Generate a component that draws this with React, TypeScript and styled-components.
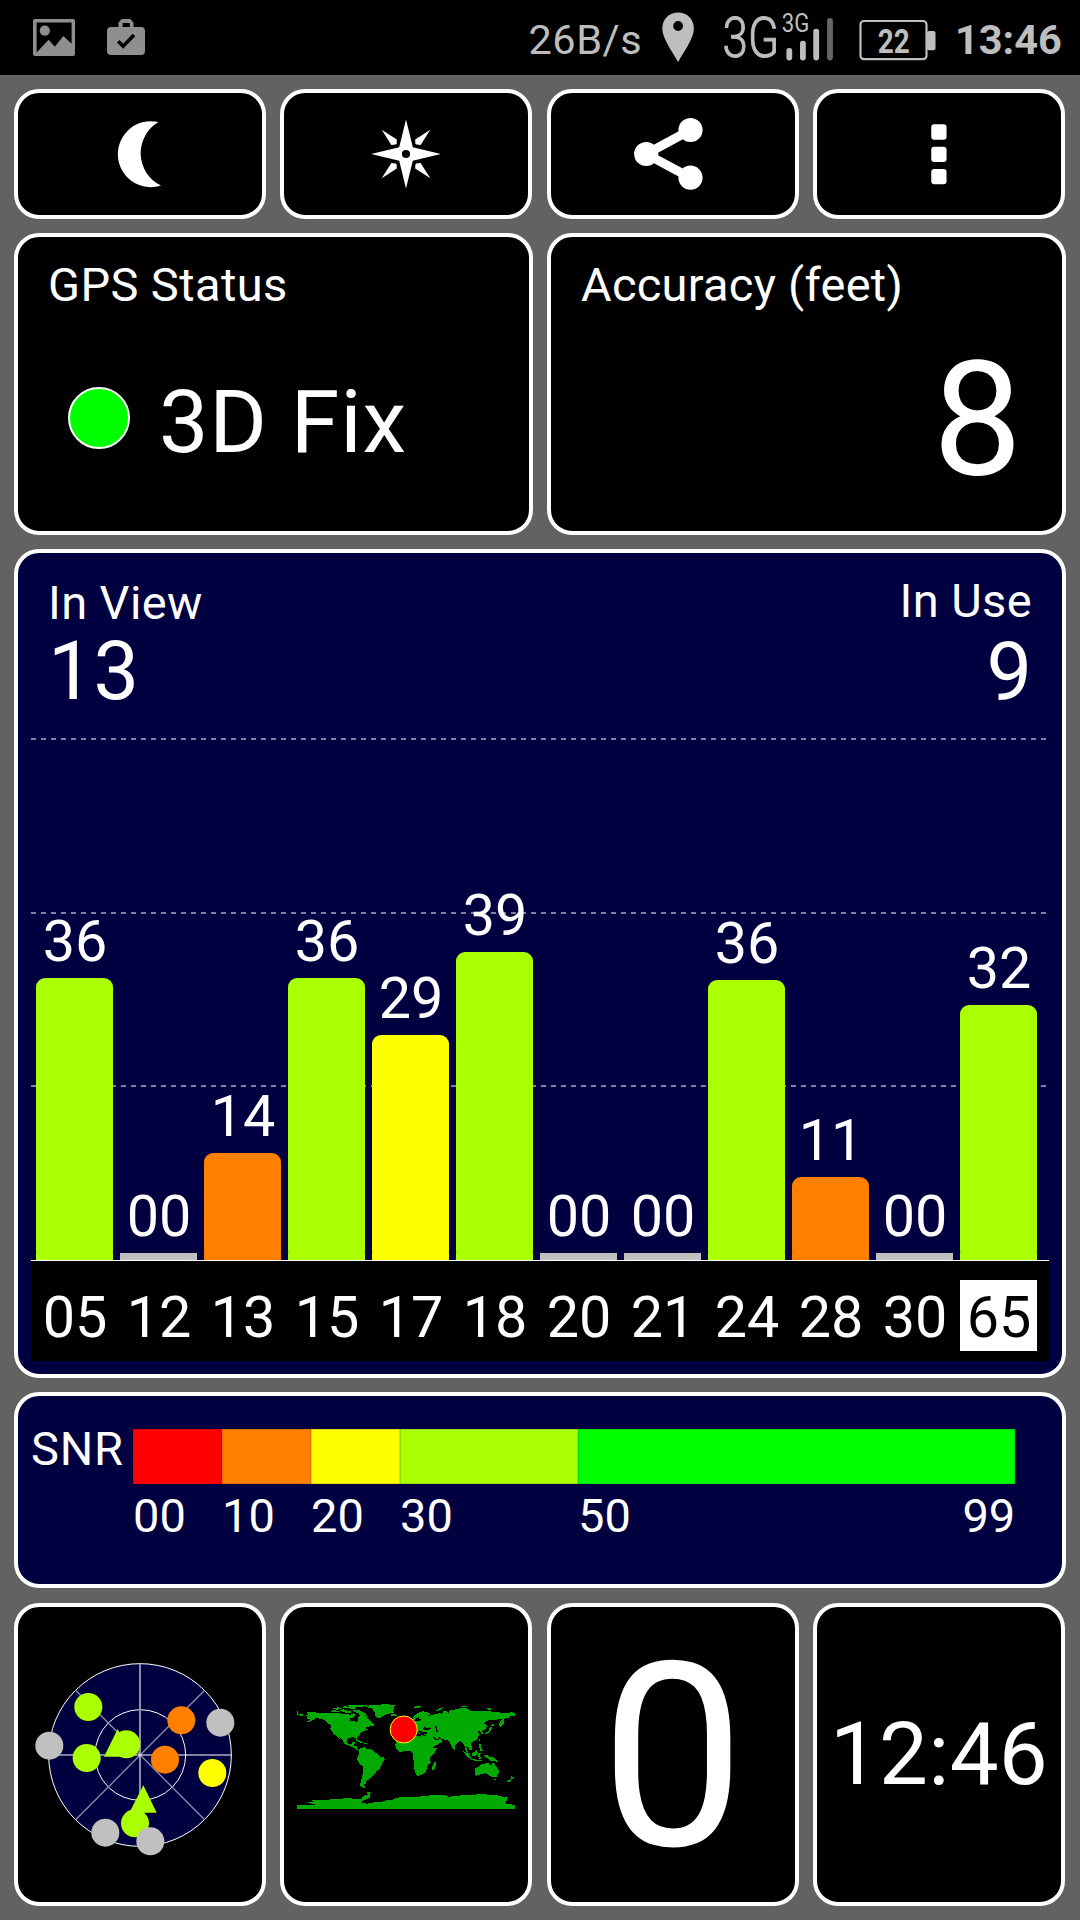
import React from 'react';
import styled, { createGlobalStyle } from 'styled-components';

const LIME = '#aaff00';
const NAVY = '#000040';
const ORANGE = '#ff8000';
const YELLOW = '#ffff00';
const SILVER = '#c0c0c0';

const GlobalStyle = createGlobalStyle`
  * { box-sizing: border-box; }
  html, body { margin: 0; padding: 0; background: #626262; }
  body { font-family: Roboto, "Noto Sans", sans-serif; color: #fff; }
  svg { display: block; flex: none; }
`;

const Screen = styled.div`
  width: 1080px;
  height: 1920px;
  display: flex;
  flex-direction: column;
  background: #626262;
  overflow: hidden;
`;

/* ---------- status bar ---------- */

const StatusBar = styled.header`
  height: 75px;
  flex: none;
  display: flex;
  align-items: flex-start;
  justify-content: space-between;
  background: #000;
  color: #bebebe;
`;

const Indicators = styled.div`
  height: 75px;
  display: flex;
`;

const NoticeGroup = styled(Indicators)`
  padding-left: 32px;
  gap: 30px;
`;

const StatusText = styled.span<{ $width: number; $bold?: boolean; $track?: number }>`
  width: ${(p) => p.$width}px;
  padding-top: 18.5px;
  font-size: 41.5px;
  line-height: 42px;
  white-space: nowrap;
  font-weight: ${(p) => (p.$bold ? 700 : 400)};
  letter-spacing: ${(p) => p.$track ?? 0}px;
`;

/* ---------- cards ---------- */

const Body = styled.main`
  flex: 1;
  padding: 14px 14px 0;
  display: flex;
  flex-direction: column;
  gap: 14px;
`;

const Row = styled.section<{ $height: number }>`
  height: ${(p) => p.$height}px;
  display: flex;
  gap: 14px;
`;

const TileRow = styled.section<{ $height: number; $offset?: number }>`
  height: ${(p) => p.$height}px;
  margin-top: ${(p) => p.$offset ?? 0}px;
  display: grid;
  grid-template-columns: repeat(4, 252px);
  column-gap: 14.334px;
`;

const Card = styled.div<{ $navy?: boolean }>`
  flex: 1 1 0;
  min-width: 0;
  display: flex;
  flex-direction: column;
  border: 4px solid #fff;
  border-radius: 25px;
  background: ${(p) => (p.$navy ? NAVY : '#000')};
`;

const ButtonCard = styled(Card).attrs({ as: 'button' })`
  padding: 0;
  align-items: center;
  justify-content: center;
`;

const CenterCard = styled(Card)`
  align-items: center;
  justify-content: center;
`;

const Label = styled.div<{ $track?: number }>`
  font-size: 47px;
  line-height: 47px;
  white-space: nowrap;
  letter-spacing: ${(p) => p.$track ?? 0}px;
`;

const ReadoutCard = styled(Card)`
  padding: 24px 30px 0 30px;
`;

const FixRow = styled.div`
  display: flex;
  align-items: center;
  gap: 29px;
  padding: 70px 0 0 20px;
`;

const FixDot = styled.span`
  width: 62px;
  height: 62px;
  margin-top: -9px;
  border-radius: 50%;
  border: 2px solid #fff;
  background: #00ff00;
`;

const FixText = styled.span`
  font-size: 88px;
  line-height: 88px;
  white-space: nowrap;
  letter-spacing: 0.9px;
`;

const Accuracy = styled.div`
  align-self: flex-end;
  padding: 32px 10px 0 0;
  font-size: 159px;
  line-height: 159px;
`;

/* ---------- satellite chart ---------- */

const ChartCard = styled(Card)`
  padding: 0 13px;
`;

const Counts = styled.div`
  height: 185px;
  display: flex;
  justify-content: space-between;
  padding: 26px 17px 0 17px;
`;

const Count = styled.div<{ $right?: boolean }>`
  display: flex;
  flex-direction: column;
  gap: ${(p) => (p.$right ? 7.5 : 5)}px;
  align-items: ${(p) => (p.$right ? 'flex-end' : 'flex-start')};
  margin-top: ${(p) => (p.$right ? -2 : 0)}px;
`;

const CountValue = styled.div`
  font-size: 81px;
  line-height: 81px;
`;

const dash = 'repeating-linear-gradient(90deg, #8080a0 0 5px, transparent 5px 10px)';

const Plot = styled.div`
  height: 522px;
  padding-left: 5px;
  display: flex;
  align-items: flex-end;
  gap: 7px;
  background-image: ${dash}, ${dash}, ${dash};
  background-size: 1016px 2px;
  background-repeat: no-repeat;
  background-position: 0 0, 0 174px, 0 347px;
`;

const Column = styled.div`
  width: 77px;
  display: flex;
  flex-direction: column;
  align-items: center;
`;

const Digits = styled.span`
  padding-left: 1px;
  font-size: 57.5px;
  line-height: 57px;
  margin-bottom: 8px;
`;

const BarTop = styled.div<{ $height: number; $color: string }>`
  width: 77px;
  height: ${(p) => p.$height}px;
  border-radius: 9px 9px 1px 1px;
  background: ${(p) => p.$color};
`;

const BarFoot = styled.div<{ $color: string }>`
  width: 77px;
  height: 7px;
  background: ${(p) => p.$color};
`;

const Axis = styled.div`
  height: 101px;
  padding: 19px 0 0 5px;
  display: flex;
  gap: 7px;
  border-top: 1px solid #fff;
  background: #000;
`;

const AxisId = styled.span<{ $selected?: boolean }>`
  width: 77px;
  height: 71px;
  padding-left: 1px;
  font-size: 57.5px;
  line-height: 76px;
  text-align: center;
  color: ${(p) => (p.$selected ? '#000' : '#fff')};
  background: ${(p) => (p.$selected ? '#fff' : 'transparent')};
`;

/* ---------- SNR legend ---------- */

const SnrCard = styled(Card)`
  flex-direction: row;
  padding: 33px 0 0 13px;
`;

const SnrTitle = styled.div`
  width: 102px;
  font-size: 47px;
  line-height: 39px;
  white-space: nowrap;
  letter-spacing: 0.8px;
`;

const Scale = styled.div`
  display: flex;
`;

const Step = styled.div<{ $width: number }>`
  width: ${(p) => p.$width}px;
`;

const Swatch = styled.div<{ $color: string }>`
  height: 54.5px;
  background: ${(p) => p.$color};
  box-shadow: inset 0 0 0 0.5px rgba(0, 0, 64, 0.25);
`;

const StepLabels = styled.div`
  display: flex;
  justify-content: space-between;
  padding-top: 8px;
`;

/* ---------- bottom tiles ---------- */

const Speed = styled.div`
  padding-top: 6px;
  font-size: 257px;
  line-height: 257px;
`;

const Clock = styled.div`
  font-size: 87px;
  line-height: 87px;
  white-space: nowrap;
  letter-spacing: 0.3px;
`;

/* ---------- drawings ---------- */

const PictureIcon = () => (
  <svg width="44" height="75" viewBox="32 0 44 75" fill="#8f8f8f">
    <path fillRule="evenodd" d="M35 19H73a2 2 0 0 1 2 2V54a2 2 0 0 1-2 2H35a2 2 0 0 1-2-2V21a2 2 0 0 1 2-2ZM36.6 22.6V52.6L48.6 39.7L54.8 46.8L63.3 36L71.6 43.8V22.6Z" />
    <circle cx="44.8" cy="30.7" r="5.1" />
  </svg>
);

const BagIcon = () => (
  <svg width="40" height="75" viewBox="106 0 40 75">
    <path fill="#8f8f8f" fillRule="evenodd" d="M118.5 27V22.5L121.8 19H130.2L133.5 22.5V27H141a4 4 0 0 1 4 4V51a4 4 0 0 1-4 4H111a4 4 0 0 1-4-4V31a4 4 0 0 1 4-4ZM122.6 27H129.8V23H122.6Z" />
    <path fill="none" stroke="#000" strokeWidth="3.6" d="M118.2 41.2L123.2 46.2L134 35" />
  </svg>
);

const PinIcon = () => (
  <svg width="61" height="75" viewBox="662.5 0 61 75">
    <path fill="#bebebe" fillRule="evenodd" d="M678.6 12.5C687.5 12.5 694.4 19 694.4 28.5C694.4 38 685.5 50 678.6 62C671.7 50 662.8 38 662.8 28.5C662.8 19 669.7 12.5 678.6 12.5ZM678.6 21.1a4.9 4.9 0 1 0 0 9.8a4.9 4.9 0 1 0 0-9.8Z" />
  </svg>
);

const SignalIcon = () => (
  <svg width="136.5" height="75" viewBox="723 0 136.5 75" fill="#bebebe" fontFamily="Roboto, sans-serif">
    <text transform="translate(722.6 57) scale(0.83 1)" fontSize="55" fontWeight="300" stroke="#bebebe" strokeWidth="1">3G</text>
    <text transform="translate(781.8 31.8) scale(0.87 1)" fontSize="25.5">3G</text>
    <rect x="786.4" y="48" width="5.8" height="12.4" rx="2.8" />
    <rect x="800" y="40.8" width="5.8" height="19.6" rx="2.8" />
    <rect x="813.3" y="28.8" width="5.8" height="31.6" rx="2.8" />
    <rect x="827.1" y="18" width="5.8" height="42.4" rx="2.8" fill="#666" />
  </svg>
);

const BatteryIcon = () => (
  <svg width="96" height="75" viewBox="859.5 0 96 75" fill="#bebebe">
    <rect x="861" y="21" width="66" height="38.2" rx="3.5" fill="none" stroke="#bebebe" strokeWidth="2.2" />
    <rect x="927.5" y="31" width="8.5" height="19.3" rx="2" />
    <text x="878.3" y="53" fontSize="34" fontWeight="700" fontFamily="Roboto, sans-serif" textLength="32" lengthAdjust="spacingAndGlyphs">22</text>
  </svg>
);

const MoonIcon = () => (
  <svg width="72" height="72" viewBox="103.5 118 72 72" fill="#fff">
    <path d="M158 122.1A33 33 0 1 0 160.5 185.6A36 36 0 0 1 158 122.1Z" />
  </svg>
);

const CompassIcon = () => (
  <svg width="72" height="72" viewBox="-36 -36 72 72" fill="#fff">
    <path fillRule="evenodd" d="M0-34.5L6.8-6.7L34.8 0L6.8 6.7L0 34.5L-6.8 6.7L-34.8 0L-6.8-6.7ZM0-4.1a4.1 4.1 0 1 0 0 8.2a4.1 4.1 0 1 0 0-8.2Z" />
    {[[1, 1], [-1, 1], [1, -1], [-1, -1]].map(([sx, sy]) => (
      <path key={`${sx}${sy}`} transform={`scale(${sx} ${sy})`} d="M24.3 24.3L14.6 9L10.3 9.6L9.3 10.8L9.2 14.6Z" />
    ))}
  </svg>
);

const ShareIcon = () => (
  <svg width="84" height="84" viewBox="630.5 112 84 84" fill="#fff">
    <path fill="none" stroke="#fff" strokeWidth="9" d="M690 130L645.7 154L690 177.7" />
    <circle cx="645.7" cy="154" r="12.1" />
    <circle cx="690" cy="130" r="12.1" />
    <circle cx="690" cy="177.7" r="12.1" />
  </svg>
);

const MenuIcon = () => (
  <svg width="40" height="72" viewBox="919.25 118 40 72" fill="#fff">
    <rect x="931.5" y="124.3" width="15.3" height="15.4" rx="3" />
    <rect x="931.5" y="146.7" width="15.3" height="15.4" rx="3" />
    <rect x="931.5" y="169" width="15.3" height="15.2" rx="3" />
  </svg>
);

const SKY_SATS: Array<[number, number, string]> = [
  [265, 349, LIME],
  [148, 465, SILVER],
  [260, 502, LIME],
  [544, 389, ORANGE],
  [661, 396, SILVER],
  [495, 507, ORANGE],
  [637, 547, YELLOW],
  [405, 698, LIME],
  [316, 726, SILVER],
  [451, 752, SILVER],
];

const SkyPlot = () => (
  <svg width="220" height="204" viewBox="90 187 660 612">
    <circle cx="420" cy="493" r="274" fill={NAVY} stroke="#fff" strokeWidth="3" />
    <circle cx="421" cy="493" r="136" fill="none" stroke="#fff" strokeWidth="3" />
    <g stroke="#8c8cab" strokeWidth="4">
      <path d="M227 299L614 687M227 687L614 299" />
      <path d="M420 219V767" strokeWidth="6" />
    </g>
    <path d="M146 493H694" stroke="#fff" strokeWidth="3" />
    <circle cx="420" cy="493" r="5" fill="#c8c8d8" />
    <path d="M353 415L393 498H312Z M430 584L470 666H388Z" fill={LIME} />
    <circle cx="379" cy="461" r="42" fill={LIME} />
    {SKY_SATS.map(([x, y, color]) => (
      <circle key={`${x}-${y}`} cx={x} cy={y} r="42" fill={color} />
    ))}
  </svg>
);

const WorldMap = () => (
  <svg width="220" height="108" viewBox="49 91.5 660 324" fill="#00aa00">
    <g shapeRendering="crispEdges">
      {/* North America */}
      <path d="M51 120H55V129L70 132V136L51 134ZM78 127L86 124L100 123L110 126L125 127L150 127L165 128L176 126L185 129L205 130L212 134L222 128L226 134L222 140L210 144L212 150L222 150L228 155L235 151L234 142L240 136L238 128L250 128L256 136L262 134L264 144L272 152L282 162L282 167L272 167L262 170L256 173L264 177L252 182L243 187L240 194L232 200L230 210L227 202L220 200L206 202L200 208L203 218L210 222L216 219L219 214L228 215L224 222L222 226L232 228L233 236L242 239L238 242L228 236L218 229L205 224L193 219L188 208L178 198L181 206L172 199L160 188L152 176L154 164L144 158L136 150L124 145L108 142L100 149L88 154L80 155L92 147L80 143L84 138L79 134L88 131Z" />
      {/* Arctic islands */}
      <path d="M150 122L165 119L178 122L176 126L160 125ZM161 114L175 110L184 114L172 118ZM182 120L190 116L204 121L212 118L214 126L200 127L190 125ZM186 109L200 107L208 111L196 114ZM205 105L225 102L255 102L262 105L248 109L232 109L226 114L212 115L208 109ZM218 119L230 117L244 121L254 126L262 131L254 134L244 128L232 127L226 124Z" />
      {/* Greenland and Iceland */}
      <path d="M258 108L275 103L300 103L312 99L326 100L330 104L352 104L342 109L344 118L338 122L342 126L325 131L314 133L303 142L292 141L286 134L286 126L280 122L278 113L268 112ZM334 132L346 131L355 134L348 138L336 137Z" />
      {/* Caribbean */}
      <path d="M225 207L234 207L244 213L250 217L240 216L232 211ZM252 217L264 218L262 221L252 220Z" />
      {/* South America */}
      <path d="M238 236L244 232L254 230L258 234L270 235L278 238L286 246L296 252L300 258L312 261L316 266L310 275L304 288L300 296L290 302L284 312L276 320L270 322L266 328L258 332L260 338L252 342L256 348L258 353L248 350L241 346L244 330L248 318L250 300L250 288L240 280L232 264L237 254Z" />
      {/* Africa */}
      <path d="M349 208L360 194L375 188L405 187L408 194L420 199L426 194L446 198L450 210L458 224L462 232L473 232L468 242L458 254L450 262L453 276L444 284L442 294L436 306L426 314L412 316L406 304L402 290L404 276L399 262L400 250L392 242L380 240L370 243L358 243L350 236L347 224ZM464 276L470 274L469 284L464 297L458 298L457 288Z" />
      {/* Eurasia */}
      <path d="M399 143L404 135L415 127L430 122L442 125L453 130L444 136L456 134L468 130L482 128L488 130L492 122L500 122L506 127L512 120L530 116L548 111L562 113L570 120L590 121L604 123L620 122L650 124L668 127L690 127L696 124L705 128L705 137L694 137L686 142L676 142L672 150L674 158L662 170L658 166L660 154L668 146L656 144L650 149L632 148L620 152L612 158L622 164L618 176L608 182L612 190L606 190L600 180L592 181L598 188L596 200L590 208L578 215L572 220L578 230L578 236L570 240L566 230L560 230L562 240L570 252L566 254L558 242L556 228L550 218L544 212L534 216L526 224L526 238L520 236L514 224L509 212L500 208L488 206L480 200L474 200L486 209L486 214L474 223L460 230L454 222L444 204L440 194L430 191L420 190L414 184L408 182L400 176Z" />
      <path d="M400 110L410 106L426 107L422 111L412 113ZM470 120L480 113L490 110L486 116L476 122ZM543 107L556 106L566 110L552 111ZM616 115L630 113L640 116L628 118Z" />
      {/* East Asian islands */}
      <path d="M632 168L638 170L634 180L628 187L616 191L614 188L626 182ZM637 160L644 162L640 167L634 166ZM597 206L601 206L599 212ZM597 220L603 222L604 232L610 240L604 244L600 234ZM550 242L558 244L566 254L574 262L572 266L562 258ZM576 248L584 244L592 238L594 246L588 258L578 256ZM572 266L588 267L606 270L604 273L586 271ZM596 249L606 248L600 254L604 264L598 264L595 256ZM614 254L622 254L628 258L640 260L650 268L655 275L642 270L634 272L626 264L616 260Z" />
      {/* Australia and New Zealand */}
      <path d="M586 294L598 288L606 281L614 282L618 276L630 276L628 283L636 286L640 274L646 284L652 292L658 300L656 312L648 321L638 320L630 316L624 311L616 308L602 312L590 316L585 312L587 304ZM643 326L649 326L646 331ZM693 315L698 318L704 320L698 327L694 324ZM692 325L696 328L688 336L681 334Z" />
      {/* Antarctica */}
      <path d="M51 404H112L98 400L86 396L102 394L96 390L118 387L150 387L165 385L190 384L196 382L210 382L216 384L240 384L246 386L250 378L264 372L262 366L274 364L270 370L272 380L262 386L250 390L246 396L262 400L280 396L306 394L318 390L340 387L352 382L370 379L420 378L448 375L462 373L474 372L480 374L500 375L508 380L520 375L540 375L560 372L590 372L610 370L630 373L656 375L670 379L688 379L682 385L684 392L672 394L680 400L705 403V414H51Z" />
      {/* inland seas */}
      <path fill="#000" d="M428 175L436 170L444 172L452 170L454 176L440 178L430 179ZM466 167L473 168L471 174L476 184L470 185L468 176ZM414 181L426 183L440 184L442 191L430 191L418 188ZM402 150L410 143L418 140L416 146L424 146L418 152L408 153ZM458 198L464 199L470 206L478 205L476 209L466 207Z" />
    </g>
    <circle cx="372" cy="177" r="40.5" fill="#ff0000" stroke="#ffff00" strokeWidth="3" />
  </svg>
);

/* ---------- data ---------- */

interface Satellite {
  id: string;
  snr: string;
  height: number;
  color: string;
  selected?: boolean;
}

const SATELLITES: Satellite[] = [
  { id: '05', snr: '36', height: 275, color: LIME },
  { id: '12', snr: '00', height: 0, color: SILVER },
  { id: '13', snr: '14', height: 100, color: ORANGE },
  { id: '15', snr: '36', height: 275, color: LIME },
  { id: '17', snr: '29', height: 218, color: YELLOW },
  { id: '18', snr: '39', height: 301, color: LIME },
  { id: '20', snr: '00', height: 0, color: SILVER },
  { id: '21', snr: '00', height: 0, color: SILVER },
  { id: '24', snr: '36', height: 273, color: LIME },
  { id: '28', snr: '11', height: 76, color: ORANGE },
  { id: '30', snr: '00', height: 0, color: SILVER },
  { id: '65', snr: '32', height: 248, color: LIME, selected: true },
];

const SNR_STEPS = [
  { from: '00', width: 89, color: '#ff0000' },
  { from: '10', width: 89, color: ORANGE },
  { from: '20', width: 89, color: YELLOW },
  { from: '30', width: 178, color: LIME },
  { from: '50', to: '99', width: 437.3, color: '#00ff00' },
];

export default function App() {
  return (
    <>
      <GlobalStyle />
      <Screen>
        <StatusBar>
          <NoticeGroup>
            <PictureIcon />
            <BagIcon />
          </NoticeGroup>
          <Indicators>
            <StatusText $width={133} $track={0.5}>26B/s</StatusText>
            <PinIcon />
            <SignalIcon />
            <BatteryIcon />
            <StatusText $width={125} $bold>13:46</StatusText>
          </Indicators>
        </StatusBar>
        <Body>
          <TileRow $height={130}>
            <ButtonCard><MoonIcon /></ButtonCard>
            <ButtonCard><CompassIcon /></ButtonCard>
            <ButtonCard><ShareIcon /></ButtonCard>
            <ButtonCard><MenuIcon /></ButtonCard>
          </TileRow>
          <Row $height={302}>
            <ReadoutCard>
              <Label $track={0.4}>GPS Status</Label>
              <FixRow>
                <FixDot />
                <FixText>3D Fix</FixText>
              </FixRow>
            </ReadoutCard>
            <ReadoutCard>
              <Label $track={0.25}>Accuracy (feet)</Label>
              <Accuracy>8</Accuracy>
            </ReadoutCard>
          </Row>
          <Row $height={829}>
            <ChartCard $navy>
              <Counts>
                <Count>
                  <Label $track={0.4}>In View</Label>
                  <CountValue>13</CountValue>
                </Count>
                <Count $right>
                  <Label $track={0.4}>In Use</Label>
                  <CountValue>9</CountValue>
                </Count>
              </Counts>
              <Plot>
                {SATELLITES.map((s) => (
                  <Column key={s.id}>
                    <Digits>{s.snr}</Digits>
                    <BarTop $height={s.height} $color={s.color} />
                    <BarFoot $color={s.color} />
                  </Column>
                ))}
              </Plot>
              <Axis>
                {SATELLITES.map((s) => (
                  <AxisId key={s.id} $selected={s.selected}>{s.id}</AxisId>
                ))}
              </Axis>
            </ChartCard>
          </Row>
          <Row $height={196}>
            <SnrCard $navy>
              <SnrTitle>SNR</SnrTitle>
              <Scale>
                {SNR_STEPS.map((s) => (
                  <Step key={s.from} $width={s.width}>
                    <Swatch $color={s.color} />
                    <StepLabels>
                      <Label>{s.from}</Label>
                      {s.to && <Label>{s.to}</Label>}
                    </StepLabels>
                  </Step>
                ))}
              </Scale>
            </SnrCard>
          </Row>
          <TileRow $height={303} $offset={1}>
            <CenterCard><SkyPlot /></CenterCard>
            <CenterCard><WorldMap /></CenterCard>
            <CenterCard><Speed>0</Speed></CenterCard>
            <CenterCard><Clock>12:46</Clock></CenterCard>
          </TileRow>
        </Body>
      </Screen>
    </>
  );
}
